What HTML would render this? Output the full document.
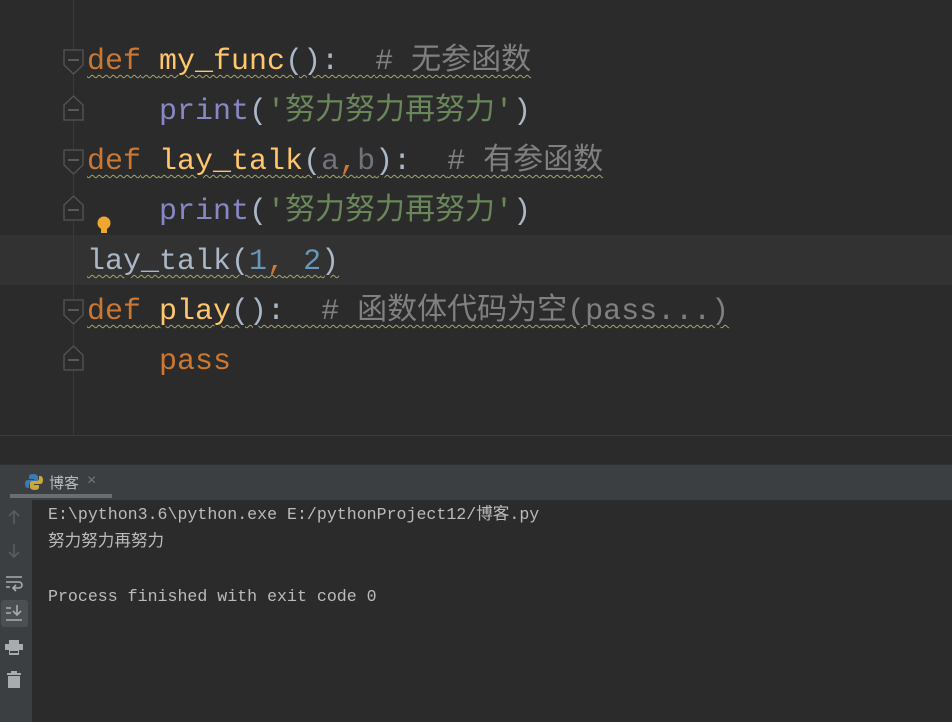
<!DOCTYPE html>
<html><head><meta charset="utf-8"><style>
body{margin:0;width:952px;height:722px;background:#2b2b2b;overflow:hidden;position:relative;font-family:"Liberation Mono","Noto Sans CJK SC",monospace}
.ed{position:absolute;left:0;top:0;width:952px;height:435px;background:#2b2b2b}
.gl{position:absolute;left:73px;top:0;width:1px;height:435px;background:#3a3a3a}
.cur{position:absolute;left:0;top:235px;width:952px;height:50px;background:#323232}
.code{position:absolute;left:87px;top:37px;font-size:30px;line-height:50px;color:#a9b7c6;white-space:pre}
.k{color:#cc7832}.f{color:#ffc66d}.p{color:#8888c6}.s{color:#6a8759}.c{color:#808080}.n{color:#6897bb}.g{color:#72737a}
.w{text-decoration:underline wavy #a5a56b;text-decoration-thickness:1px;text-underline-offset:5px}
.bar1{position:absolute;left:0;top:435px;width:952px;height:28px;background:#2b2b2b;border-top:1px solid #3c3c3c}
.tabs{position:absolute;left:0;top:464px;width:952px;height:35px;background:#3c3f41;border-top:1px solid #323232}
.tab{position:absolute;left:10px;top:494px;width:102px;height:4px;background:#6b6e70}
.side{position:absolute;left:0;top:499px;width:32px;height:223px;background:#3c3f41}
.con{position:absolute;left:48px;top:501px;font-size:16.6px;line-height:27.3px;color:#bbbbbb;white-space:pre}
</style></head><body>
<div class="ed"></div>
<div class="cur"></div>
<div class="gl"></div>
<svg style="position:absolute;left:0;top:0" width="90" height="380">
<g fill="#2b2b2b" stroke="#555" stroke-width="1.3">
<path d="M64 50h19v15l-9.5 9l-9.5-9z"/><path d="M64 120h19v-15l-9.5-9l-9.5 9z"/>
<path d="M64 150h19v15l-9.5 9l-9.5-9z"/><path d="M64 220h19v-15l-9.5-9l-9.5 9z"/>
<path d="M64 300h19v15l-9.5 9l-9.5-9z"/><path d="M64 370h19v-15l-9.5-9l-9.5 9z"/>
</g>
<g stroke="#777" stroke-width="1.3"><path d="M68 60h11M68 110h11M68 160h11M68 210h11M68 310h11M68 360h11"/></g>
</svg>
<svg style="position:absolute;left:96px;top:216px" width="16" height="20"><circle cx="8" cy="7" r="6.5" fill="#f0a732"/><rect x="5" y="13" width="6" height="4" fill="#f0a732"/></svg>
<div class="code"><span class="w"><span class="k">def</span> <span class="f">my_func</span>():  <span class="c"># 无参函数</span></span>
    <span class="p">print</span>(<span class="s">'努力努力再努力'</span>)
<span class="w"><span class="k">def</span> <span class="f">lay_talk</span>(<span class="g">a</span><span class="k">,</span><span class="g">b</span>):  <span class="c"># 有参函数</span></span>
    <span class="p">print</span>(<span class="s">'努力努力再努力'</span>)
<span class="w">lay_talk(<span class="n">1</span><span class="k">,</span> <span class="n">2</span>)</span>
<span class="w"><span class="k">def</span> <span class="f">play</span>():  <span class="c"># 函数体代码为空(pass...)</span></span>
    <span class="k">pass</span></div>
<div class="bar1"></div>
<div class="tabs"></div>
<div class="tab"></div>
<svg style="position:absolute;left:25px;top:473px" width="18" height="18"><path d="M8 1c-4 0-4 2-4 3v2h5v1H3c-2 0-3 1.5-3 4s1 4 3 4h1v-2.5c0-1.5 1-2.5 2.5-2.5h4c1.5 0 2.5-1 2.5-2.5V4c0-1.5-1.5-3-5-3z" fill="#3d7ab3"/><path d="M10 17c4 0 4-2 4-3v-2H9v-1h6c2 0 3-1.5 3-4s-1-4-3-4h-1v2.5c0 1.5-1 2.5-2.5 2.5h-4C6 8 5 9 5 10.5V14c0 1.5 1.5 3 5 3z" fill="#c8a93a"/></svg>
<div style="position:absolute;left:49px;top:472px;font-size:15px;color:#bbbbbb;font-family:'Liberation Sans','Noto Sans CJK SC',sans-serif">博客</div>
<div style="position:absolute;left:87px;top:472px;font-size:16px;color:#777;font-family:'Liberation Sans',sans-serif">×</div>
<div class="side"></div>
<svg style="position:absolute;left:0;top:499px" width="32" height="200" fill="none" stroke="#5a5d5f" stroke-width="1.6">
<path d="M14 25V12M9 17l5-5 5 5M14 58V45M9 53l5 5 5-5" />
<g stroke="#a9abad"><path d="M6 78h16M6 83h13a3 3 0 010 6h-5M16 86l-3 3 3 3M6 88h4"/></g>
<rect x="1" y="101" width="27" height="27" rx="3" fill="#4b4f52" stroke="none"/>
<g stroke="#a9abad"><path d="M6 109h5M6 114h5M6 121h16M17 106v10M13 112l4 4 4-4"/></g>
<g fill="#a9abad" stroke="none"><rect x="9" y="141" width="10" height="4"/><rect x="5" y="145" width="18" height="6"/><rect x="9" y="151" width="10" height="5"/><rect x="10" y="152" width="8" height="2" fill="#3c3f41"/>
<rect x="7" y="174" width="14" height="2"/><rect x="11" y="172" width="6" height="2"/><rect x="8" y="177" width="12" height="12"/></g>
</svg>
<div class="con">E:\python3.6\python.exe E:/pythonProject12/博客.py
努力努力再努力

Process finished with exit code 0</div>
</body></html>
